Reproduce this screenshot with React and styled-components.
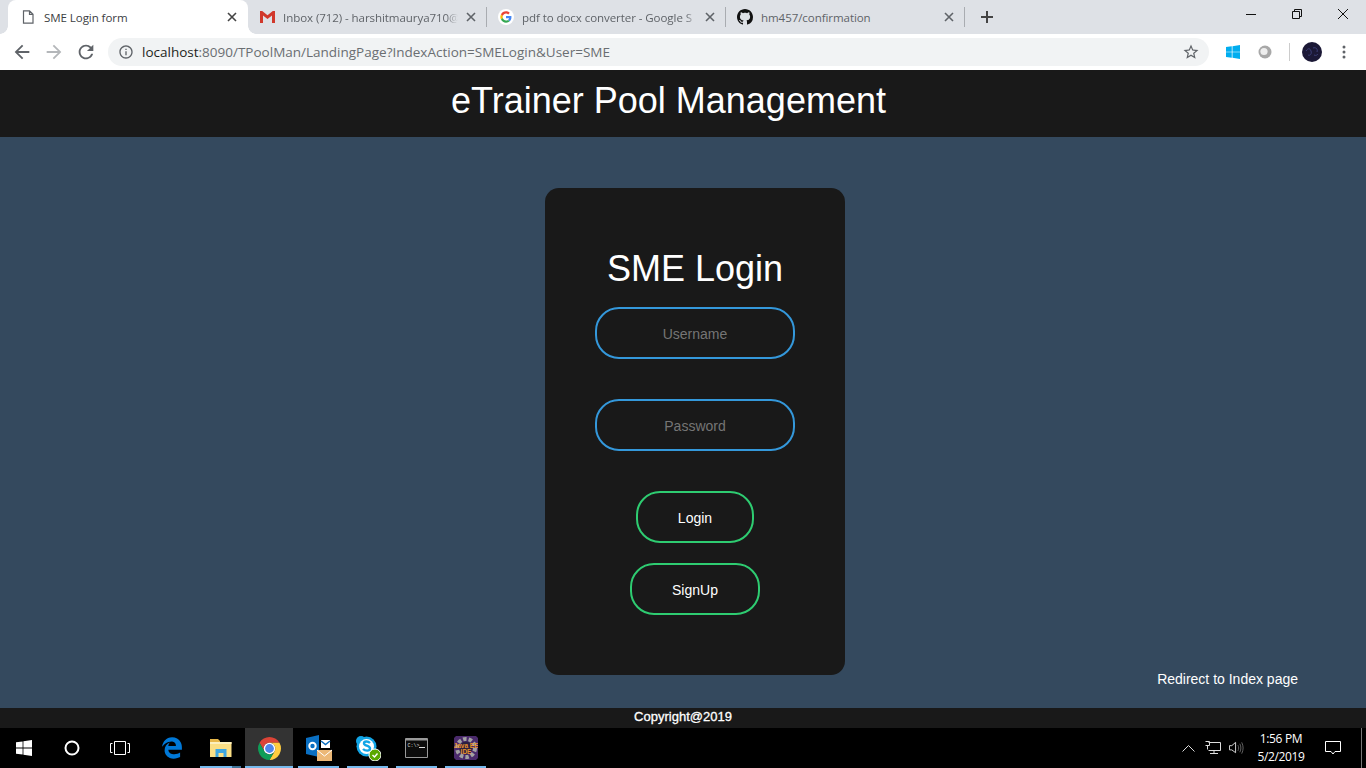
import React from "react";
import styled, { createGlobalStyle } from "styled-components";
import { FaEdgeLegacy } from "react-icons/fa";

const Global = createGlobalStyle`
  html, body { margin: 0; padding: 0; height: 100%; overflow: hidden; }
  #root { height: 100%; }
  * { box-sizing: border-box; }
`;

const Screen = styled.div`
  display: flex; flex-direction: column; width: 1366px; height: 768px;
  font-family: "Liberation Sans", Arial, sans-serif;
`;
const TabStrip = styled.div`
  display: flex; align-items: stretch; height: 34px; padding-left: 8px; background: #dee1e6;
`;
const Tab = styled.div`
  display: flex; align-items: center; height: 34px; position: relative; flex: none;
  width: ${p => (p.$active ? 240 : 239)}px;
  padding-left: ${p => (p.$active ? 12 : 11)}px; padding-right: ${p => (p.$active ? 11 : 0)}px; gap: 8px;
  background: ${p => (p.$active ? "#fff" : "transparent")};
  border-radius: ${p => (p.$active ? "8px 8px 0 0" : "0")};
  ${p => p.$active && `
    &::before, &::after { content: ""; position: absolute; bottom: 0; width: 8px; height: 8px; }
    &::before { left: -8px; background: radial-gradient(circle at 0 0, transparent 7.5px, #fff 8px); }
    &::after { right: -8px; background: radial-gradient(circle at 100% 0, transparent 7.5px, #fff 8px); }
  `}
`;
const TabDivider = styled.div`
  width: 1px; height: 20px; background: #a9acb1; flex: none; margin-left: 2px;
`;
const TabIcon = styled.span`
  display: flex; align-items: center; justify-content: center; width: 16px; height: 16px; flex: none;
`;
const TabTitle = styled.span`
  flex: 1; min-width: 0; white-space: nowrap; overflow: hidden;
  font: 11.55px "Open Sans", "Noto Sans", sans-serif; letter-spacing: -0.08px;
  color: ${p => (p.$active ? "#3c4043" : "#5f6368")};
  ${p => p.$fade && `mask-image: linear-gradient(to right, #000 calc(100% - 12px), transparent);`}
`;
const TabClose = styled.svg`
  width: 10px; height: 10px; flex: none;
`;
const NewTab = styled.svg`
  width: 14px; height: 14px; margin: 10px 0 0 15px; flex: none;
`;
const WindowControls = styled.div`
  display: flex; margin-left: auto; padding-right: 18px; gap: 36px; height: 28px; align-items: center;
`;
const WinIcon = styled.svg` width: 10px; height: 10px; `;

const Toolbar = styled.div`
  display: flex; align-items: center; height: 36px; background: #fff; padding-left: 11px;
`;
const NavIcon = styled.svg`
  width: 22px; height: 22px; margin-right: ${p => p.$gap}px; flex: none;
`;
const Omnibox = styled.div`
  display: flex; align-items: center; width: 1101px; height: 28px; padding: 0 9px 0 10px;
  background: #f1f3f4; border-radius: 14px;
`;
const OmniInfo = styled.svg` width: 16px; height: 16px; flex: none; margin-right: 8px; `;
const Url = styled.div`
  flex: 1; font: 13.5px "Open Sans", "Noto Sans", sans-serif; color: #6a6e72; white-space: nowrap;
  span { color: #1d1f21; }
`;
const ExtIcon = styled.svg`
  flex: none; margin-left: ${p => p.$left}px;
`;
const ToolSep = styled.div` width: 1px; height: 18px; background: #ccc; flex: none; margin: 0 12px 0 17px; `;
const Avatar = styled.svg` width: 20px; height: 20px; flex: none; `;

const Header = styled.header`
  height: 67px; background: #191919; color: #fff; display: flex; align-items: center; justify-content: center;
  padding: 0 29px 6px 0; font-size: 36px;
`;
const Main = styled.main`
  flex: 1; min-height: 0; background: #34495e; display: flex; padding: 51px 68px 0 545px;
`;
const Card = styled.form`
  width: 300px; height: 487px; background: #191919; border-radius: 14px; padding-top: 60px;
  display: flex; flex-direction: column; align-items: center;
`;
const Title = styled.h1`
  margin: 0 0 18px; font-size: 36px; font-weight: 400; color: #fff; line-height: 41px;
`;
const Field = styled.input`
  width: 200px; height: 52px; margin-bottom: 40px; border: 2px solid #3498db; border-radius: 24px;
  background: none; text-align: center; font: 14px "Liberation Sans", Arial, sans-serif; color: #fff; outline: none; padding: 2px 0 0;
  &::placeholder { color: #757575; opacity: 1; }
`;
const Action = styled.button`
  width: ${p => p.$w}px; height: 52px; margin-bottom: 20px; border: 2px solid #2ecc71; border-radius: 24px;
  background: none; font: 14px "Liberation Sans", Arial, sans-serif; color: #fff; padding: 2px 0 0;
`;
const Redirect = styled.a`
  margin: auto 0 21px auto; font-size: 14px; line-height: 16px; color: #fff; text-decoration: none;
`;
const Footer = styled.footer`
  height: 20px; background: #191919; color: #fff; font-size: 13px; -webkit-text-stroke: 0.3px #fff; line-height: 18px; text-align: center;
`;
const Taskbar = styled.div`
  height: 40px; background: #000; display: flex; align-items: stretch; color: #fff;
`;
const SysSlot = styled.div`
  width: 48px; display: flex; align-items: center; justify-content: center; flex: none;
`;
const Apps = styled.div` display: flex; margin-left: 3px; `;
const AppSlot = styled.div`
  width: 49px; display: flex; align-items: center; justify-content: center; position: relative; flex: none;
  color: #0078d7;
  background: ${p => (p.$active ? "#333" : "transparent")};
  border-right: ${p => (p.$active ? "1px solid #000" : "none")};
  background-clip: padding-box;
  &::after {
    content: ""; position: absolute; bottom: 0; height: 2px;
    background: ${p => (p.$stack ? "linear-gradient(to right, #76b9ed 78%, #3f7397 78%)" : "#76b9ed")};
    left: ${p => (p.$active ? 0 : 4)}px; right: ${p => (p.$active ? 0 : 4)}px;
    display: ${p => (p.$open ? "block" : "none")};
  }
`;
const Tray = styled.div`
  margin-left: auto; display: flex; align-items: center; padding-right: 4px;
`;
const TrayIcon = styled.svg`
  flex: none; margin-right: ${p => p.$gap || 0}px;
`;
const Clock = styled.div`
  width: 62px; margin: 0 13px 0 5px; text-align: center; font: 12px/18px "Open Sans", "Noto Sans", sans-serif; color: #fff; letter-spacing: -0.35px;
`;
const ShowDesktop = styled.div` width: 1px; height: 40px; background: #777; margin-left: 20px; `;

const Close = ({ c = "#5f6368" }) => (
  <TabClose viewBox="0 0 10 10"><path d="M1 1l8 8M9 1l-8 8" stroke={c} strokeWidth="1.6" fill="none" /></TabClose>
);

const GoogleG = () => (
  <svg width="16" height="16" viewBox="0 0 48 48">
    <circle cx="24" cy="24" r="24" fill="#fff" />
    <g transform="translate(7 7) scale(.71)">
      <path fill="#EA4335" d="M24 9.5c3.54 0 6.71 1.22 9.21 3.6l6.85-6.85C35.9 2.38 30.47 0 24 0 14.62 0 6.51 5.38 2.56 13.22l7.98 6.19C12.43 13.72 17.74 9.5 24 9.5z" />
      <path fill="#4285F4" d="M46.98 24.55c0-1.57-.15-3.09-.38-4.55H24v9.02h12.94c-.58 2.96-2.26 5.48-4.78 7.18l7.73 6c4.51-4.18 7.09-10.36 7.09-17.65z" />
      <path fill="#FBBC05" d="M10.53 28.59c-.48-1.45-.76-2.99-.76-4.59s.27-3.14.76-4.59l-7.98-6.19C.92 16.46 0 20.12 0 24c0 3.88.92 7.54 2.56 10.78l7.97-6.19z" />
      <path fill="#34A853" d="M24 48c6.48 0 11.93-2.13 15.89-5.81l-7.73-6c-2.15 1.45-4.92 2.3-8.16 2.3-6.26 0-11.57-4.22-13.47-9.91l-7.98 6.19C6.51 42.62 14.62 48 24 48z" />
    </g>
  </svg>
);

const Github = () => (
  <svg width="16" height="16" viewBox="0 0 16 16">
    <path fill="#111" d="M8 0C3.58 0 0 3.58 0 8c0 3.54 2.29 6.53 5.47 7.59.4.07.55-.17.55-.38 0-.19-.01-.82-.01-1.49-2.01.37-2.53-.49-2.69-.94-.09-.23-.48-.94-.82-1.13-.28-.15-.68-.52-.01-.53.63-.01 1.08.58 1.23.82.72 1.21 1.87.87 2.33.66.07-.52.28-.87.51-1.07-1.78-.2-3.64-.89-3.64-3.95 0-.87.31-1.59.82-2.15-.08-.2-.36-1.02.08-2.12 0 0 .67-.21 2.2.82.64-.18 1.32-.27 2-.27.68 0 1.36.09 2 .27 1.53-1.04 2.2-.82 2.2-.82.44 1.1.16 1.92.08 2.12.51.56.82 1.27.82 2.15 0 3.07-1.87 3.75-3.65 3.95.29.25.54.73.54 1.48 0 1.07-.01 1.93-.01 2.2 0 .21.15.46.55.38A8.013 8.013 0 0016 8c0-4.42-3.58-8-8-8z" />
  </svg>
);

const WinLogo = ({ size, c }) => (
  <svg width={size} height={size} viewBox="0 0 16 16">
    <path fill={c} d="M0 2.3l6.6-.9v6.2H0zM7.4 1.3L16 0v7.6H7.4zM0 8.4h6.6v6.2L0 13.7zM7.4 8.4H16V16l-8.6-1.3z" />
  </svg>
);

const ChromeLogo = () => (
  <svg width="23" height="23" viewBox="0 0 24 24">
    <path fill="#DB4437" d="M1.61 6A12 12 0 0 1 22.39 6H12A6 6 0 0 0 6.8 15z" />
    <path fill="#FFCD40" d="M22.39 6A12 12 0 0 1 12 24l5.2-9A6 6 0 0 0 12 6z" />
    <path fill="#0F9D58" d="M12 24A12 12 0 0 1 1.61 6L6.8 15A6 6 0 0 0 17.2 15z" />
    <circle cx="12" cy="12" r="6" fill="#fff" />
    <circle cx="12" cy="12" r="4.6" fill="#4f86ec" />
  </svg>
);

export default function App() {
  return (
    <Screen>
      <Global />
      <TabStrip>
        <Tab $active>
          <TabIcon>
            <svg width="12" height="14" viewBox="0 0 12 14"><path d="M1.5.8h6l3.5 3.5v8.9h-9.500zM7.500.8v3.500H11" fill="none" stroke="#5f6368" strokeWidth="1.200" /></svg>
          </TabIcon>
          <TabTitle $active>SME Login form</TabTitle>
          <Close c="#444" />
        </Tab>
        <Tab>
          <TabIcon>
            <svg width="15" height="12" viewBox="0 0 15 12"><path fill="#d1382c" d="M0 0h2.200L7.500 4.300 12.800 0H15v12h-3V4.500L7.500 8 3 4.500V12H0z" /></svg>
          </TabIcon>
          <TabTitle $fade>Inbox (712) - harshitmaurya710@</TabTitle>
          <Close />
          <TabDivider />
        </Tab>
        <Tab>
          <TabIcon><GoogleG /></TabIcon>
          <TabTitle $fade>pdf to docx converter - Google S</TabTitle>
          <Close />
          <TabDivider />
        </Tab>
        <Tab>
          <TabIcon><Github /></TabIcon>
          <TabTitle>hm457/confirmation</TabTitle>
          <Close />
          <TabDivider />
        </Tab>
        <NewTab viewBox="0 0 14 14"><path d="M7 1v12M1 7h12" stroke="#444" strokeWidth="2" fill="none" /></NewTab>
        <WindowControls>
          <WinIcon viewBox="0 0 10 10"><path d="M0 5.500h10" stroke="#111" fill="none" /></WinIcon>
          <WinIcon viewBox="0 0 10 10"><path d="M.5 2.500h7v7h-7zM2.500 2.500v-2h7v7h-2" stroke="#111" fill="none" /></WinIcon>
          <WinIcon viewBox="0 0 10 10"><path d="M0 0l10 10M10 0L0 10" stroke="#111" fill="none" /></WinIcon>
        </WindowControls>
      </TabStrip>
      <Toolbar>
        <NavIcon $gap={10} viewBox="0 0 24 24"><path fill="#5f6368" d="M20 11H7.830l5.590-5.590L12 4l-8 8 8 8 1.410-1.410L7.830 13H20v-2z" /></NavIcon>
        <NavIcon $gap={10} viewBox="0 0 24 24"><path fill="#b4b7ba" d="M12 4l-1.410 1.410L16.170 11H4v2h12.170l-5.580 5.590L12 20l8-8z" /></NavIcon>
        <NavIcon $gap={11} viewBox="0 0 24 24"><path fill="#5f6368" d="M17.650 6.350A7.950 7.950 0 0 0 12 4c-4.420 0-7.990 3.580-7.990 8s3.570 8 7.990 8c3.730 0 6.840-2.550 7.730-6h-2.080A5.990 5.990 0 0 1 12 18c-3.310 0-6-2.690-6-6s2.690-6 6-6c1.660 0 3.140.690 4.220 1.780L13 11h7V4l-2.350 2.350z" /></NavIcon>
        <Omnibox>
          <OmniInfo viewBox="0 0 24 24"><path fill="#5f6368" d="M11 7h2v2h-2zm0 4h2v6h-2zm1-9C6.480 2 2 6.480 2 12s4.480 10 10 10 10-4.480 10-10S17.520 2 12 2zm0 18c-4.410 0-8-3.590-8-8s3.590-8 8-8 8 3.590 8 8-3.590 8-8 8z" /></OmniInfo>
          <Url><span>localhost</span>:8090/TPoolMan/LandingPage?IndexAction=SMELogin&amp;User=SME</Url>
          <svg width="18" height="18" viewBox="0 0 24 24"><path fill="#5f6368" d="M22 9.240l-7.190-.620L12 2 9.190 8.630 2 9.240l5.460 4.730L5.820 21 12 17.270 18.180 21l-1.630-7.030L22 9.240zM12 15.400l-3.760 2.270 1-4.280-3.320-2.880 4.380-.380L12 6.100l1.710 4.040 4.380.380-3.320 2.880 1 4.280L12 15.400z" /></svg>
        </Omnibox>
        <ExtIcon $left={17} width="14" height="14" viewBox="0 0 16 16">
          <path fill="#00adef" d="M0 2.300l6.600-.9v6.200H0zM7.400 1.300L16 0v7.600H7.400zM0 8.400h6.600v6.200L0 13.700zM7.400 8.400H16V16l-8.600-1.300z" />
        </ExtIcon>
        <ExtIcon $left={18} width="14" height="14" viewBox="0 0 14 14">
          <circle cx="7" cy="7" r="6.500" fill="#a8a8a8" />
          <circle cx="6" cy="6.500" r="3.600" fill="#eee" />
        </ExtIcon>
        <ToolSep />
        <Avatar viewBox="0 0 20 20">
          <circle cx="10" cy="10" r="10" fill="#1b1836" />
          <path d="M4 9c2-3 4-3 5 0s-1 5-3 4M11 6c3-1 5 1 4 4M12 13c2 1 3 0 4-1" stroke="#3c3f78" fill="none" />
        </Avatar>
        <ExtIcon $left={20} width="4" height="14" viewBox="0 0 4 14">
          <circle cx="2" cy="2" r="1.500" fill="#5f6368" /><circle cx="2" cy="7" r="1.500" fill="#5f6368" /><circle cx="2" cy="12" r="1.500" fill="#5f6368" />
        </ExtIcon>
      </Toolbar>
      <Header>eTrainer Pool Management</Header>
      <Main>
        <Card onSubmit={e => e.preventDefault()}>
          <Title>SME Login</Title>
          <Field placeholder="Username" />
          <Field placeholder="Password" type="password" />
          <Action $w={118}>Login</Action>
          <Action $w={130}>SignUp</Action>
        </Card>
        <Redirect href="#">Redirect to Index page</Redirect>
      </Main>
      <Footer>Copyright@2019</Footer>
      <Taskbar>
        <SysSlot><WinLogo size={16} c="#fff" /></SysSlot>
        <SysSlot>
          <svg width="16" height="16" viewBox="0 0 16 16"><circle cx="8" cy="8" r="6.500" fill="none" stroke="#fff" strokeWidth="2" /></svg>
        </SysSlot>
        <SysSlot>
          <svg width="20" height="14" viewBox="0 0 20 14"><path d="M4.500.5h11v13h-11zM2.500 2.500H.5v9h2M17.500 2.500h2v9h-2" fill="none" stroke="#fff" /></svg>
        </SysSlot>
        <Apps>
          <AppSlot><FaEdgeLegacy size={22} /></AppSlot>
          <AppSlot $open $stack>
            <svg width="22" height="19" viewBox="0 0 22 19">
              <path fill="#e8b84a" d="M0 0h8l2 2v2H0z" />
              <path fill="#fbdf85" d="M0 3h21.500v15H0z" />
              <path fill="#fdf0bd" d="M0 3h21.500v2H0z" />
              <path fill="#3ea6e0" d="M5.500 10h11v8h-3v-4h-5v4h-3z" />
            </svg>
          </AppSlot>
          <AppSlot $open $active><ChromeLogo /></AppSlot>
          <AppSlot $open>
            <svg width="26" height="26" viewBox="0 0 26 26">
              <path fill="#0a6fc2" d="M0 3l13-3v22L0 19z" />
              <circle cx="6.500" cy="11" r="3.200" fill="none" stroke="#fff" strokeWidth="2" />
              <path fill="#fff" d="M15 5h9v8h-9z" />
              <path fill="none" stroke="#0a6fc2" strokeWidth="1.500" d="M15 6l4.500 3.500L24 6" />
              <path fill="#ecb877" d="M11 15h15v11H11z" />
              <path fill="none" stroke="#fff" d="M11 15l7.500 6 7.500-6" />
            </svg>
          </AppSlot>
          <AppSlot $open>
            <svg width="26" height="26" viewBox="0 0 26 26">
              <circle cx="6" cy="6" r="5" fill="#12a5e6" />
              <circle cx="17" cy="17" r="5" fill="#12a5e6" />
              <circle cx="11.500" cy="11.500" r="10" fill="#12a5e6" />
              <circle cx="11.500" cy="11.500" r="7.500" fill="#fff" />
              <path d="M15 8c-2-2-6-2-6 .5s6 2 6 5-5 2.500-7 .5" fill="none" stroke="#12a5e6" strokeWidth="2.400" />
              <circle cx="20" cy="20" r="6" fill="#5aa700" stroke="#fff" />
              <path d="M17.500 20l2 2 3-3.500" stroke="#fff" strokeWidth="1.400" fill="none" />
            </svg>
          </AppSlot>
          <AppSlot $open>
            <svg width="23" height="20" viewBox="0 0 23 20">
              <path fill="#0c0c0c" stroke="#999" d="M.5.500h22v19H.5z" />
              <path fill="#999" d="M1 1h21v1.500H1z" />
              <text x="2.500" y="9" fontSize="5" fontFamily="Liberation Mono" fill="#ddd">C:\&gt;</text>
              <path stroke="#ddd" d="M14 9.500h6" fill="none" />
            </svg>
          </AppSlot>
          <AppSlot $open>
            <svg width="24" height="24" viewBox="0 0 24 24">
              <path fill="#4a2a6b" d="M0 2l2-2h20l2 2v20l-2 2H2l-2-2z" />
              <circle cx="12" cy="12" r="9" fill="none" stroke="#a2a2a2" strokeWidth="4" strokeDasharray="3.500 2.100" />
              <circle cx="12" cy="12" r="6.500" fill="#2c2140" />
              <text x="12" y="11.500" textAnchor="middle" fontSize="6.500" fontFamily="Liberation Sans" fontWeight="700" fill="#e8912c">Java EE</text>
              <text x="12" y="18" textAnchor="middle" fontSize="6.500" fontFamily="Liberation Sans" fontWeight="700" fill="#e8912c">IDE</text>
            </svg>
          </AppSlot>
        </Apps>
        <Tray>
          <TrayIcon $gap={10} width="13" height="8" viewBox="0 0 13 8"><path d="M.5 7.500l6-6 6 6" fill="none" stroke="#ddd" /></TrayIcon>
          <TrayIcon $gap={8} width="16" height="14" viewBox="0 0 16 14">
            <path d="M3.500 1.500H15.500V9.500H3.500M9 9.500v3M5 12.500h8M.500.500h4v4h-4M2.500 4.500v4" fill="none" stroke="#ddd" />
          </TrayIcon>
          <TrayIcon width="16" height="14" viewBox="0 0 17 14">
            <path d="M.5 4.500h2.500L7 1v11L3 9H.5z" fill="none" stroke="#ddd" />
            <path d="M9.500 4c1 2 1 4 0 6M11.500 2.500c1.500 3 1.500 6 0 9M13.500 1c2 4 2 8 0 12" fill="none" stroke="#666" />
          </TrayIcon>
          <Clock>1:56 PM<br />5/2/2019</Clock>
          <TrayIcon width="16" height="14" viewBox="0 0 16 14">
            <path d="M.5.500h15v10h-5.500l-2 2.500-2-2.500H.5z" fill="none" stroke="#fff" />
          </TrayIcon>
          <ShowDesktop />
        </Tray>
      </Taskbar>
    </Screen>
  );
}
